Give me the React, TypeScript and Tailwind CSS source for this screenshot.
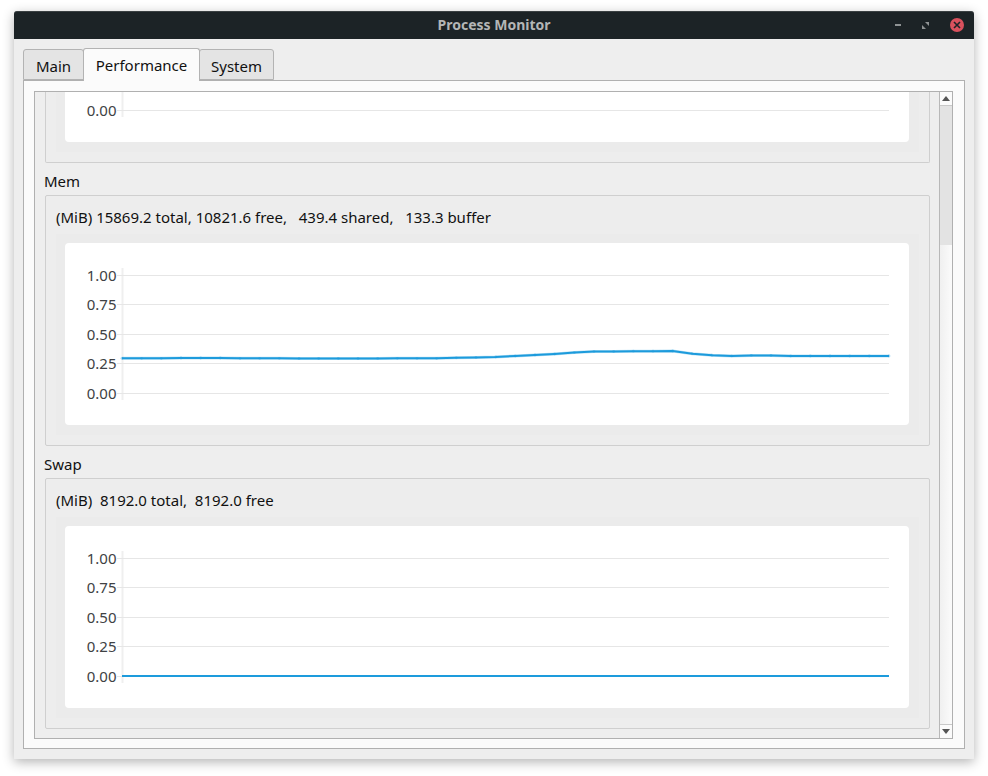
const FONT = "font-['Noto_Sans',sans-serif]";

const TICKS = ['1.00', '0.75', '0.50', '0.25', '0.00'];
const TICK_Y = [32, 61, 91, 120, 150];

// one sample every 19.67px, y is in chart pixels
const MEM_Y = [
  115.3, 115.3, 115.3, 115, 115, 115, 115.3, 115.3, 115.3, 115.5, 115.5, 115.5, 115.5, 115.4, 115.3, 115.3, 115.3, 114.8, 114.4, 114,
  113, 112, 111, 109.6, 108.6, 108.5, 108.2, 108.2, 108, 110.7, 112.2, 112.9, 112.4, 112.5, 113, 113, 113, 113, 113, 113,
];
const SWAP_Y = [150, 150];

function Chart({ data = [], cropTop = 0, markers = false }: { data?: number[]; cropTop?: number; markers?: boolean }) {
  const height = 182 - cropTop;
  const step = data.length > 1 ? 767 / (data.length - 1) : 0;
  const points = data.map((y, i) => [57 + i * step, y - cropTop]);
  const pointsAttr = points.map(([x, y]) => `${x},${y}`).join(' ');

  return (
    <svg width="844" height={height} className={cropTop ? 'block rounded-b bg-white' : 'block rounded bg-white'}>
      <line x1="57.5" y1={Math.max(25 - cropTop, 0)} x2="57.5" y2={157 - cropTop} stroke="#efefef" strokeWidth="2" />
      {TICKS.map((tick, i) =>
        TICK_Y[i] - cropTop < 8 ? null : (
          <g key={tick}>
            <line x1="52" y1={TICK_Y[i] - cropTop + 0.5} x2="824" y2={TICK_Y[i] - cropTop + 0.5} stroke="#e6e6e6" />
            <text
              x="51.5"
              y={TICK_Y[i] - cropTop + 5.5}
              textAnchor="end"
              fontSize="15"
              fill="#404244"
              fontFamily="Noto Sans, sans-serif"
            >
              {tick}
            </text>
          </g>
        ),
      )}
      {data.length > 0 && (
        <>
          {markers && <polyline points={pointsAttr} fill="none" stroke="#20a0de" strokeOpacity="0.3" strokeWidth="3" />}
          <polyline points={pointsAttr} fill="none" stroke="#1d9bdc" strokeWidth="2" />
          {markers &&
            points.map(([x, y]) => <circle key={x} cx={x} cy={y} r="1.4" fill="#1d9bdc" fillOpacity="0.4" />)}
        </>
      )}
    </svg>
  );
}

function MetricGroup({
  label,
  info,
  data,
  markers = false,
}: {
  label: string;
  info: string;
  data: number[];
  markers?: boolean;
}) {
  return (
    <div className="mt-[10px]">
      <div className="h-[22px] pl-[9px] text-[15px] leading-[16px] text-[#111]">{label}</div>
      <div className="ml-[10px] h-[251px] w-[885px] rounded-[2px] border border-[#cfcfcf] bg-[#ededed]">
        <div className="h-[38px] whitespace-pre pl-[10px] pt-[12px] text-[15px] leading-[19px] text-[#111]">{info}</div>
        <div className="mx-[10px] bg-[#ebebeb] px-[9px] pb-[10px] pt-[9px]">
          <Chart data={data} markers={markers} />
        </div>
      </div>
    </div>
  );
}

export default function App() {
  return (
    <div className={`h-[776px] w-[988px] bg-white pl-[14px] pt-[11px] ${FONT}`}>
      <div className="flex h-[748px] w-[960px] flex-col rounded-t-[3px] bg-[#eeeeee] shadow-[0_3px_12px_rgba(0,0,0,0.3)]">
        <div className="relative flex h-[28px] shrink-0 items-center justify-center rounded-t-[3px] border-t border-[#3a4042] bg-[#1c2326]">
          <span className="pb-[2px] text-[14px] font-bold text-[#b4b6b6]">Process Monitor</span>
          <div className="absolute right-[10px] top-[6px] flex items-center gap-[21px]">
            <div className="h-[2px] w-[6px] bg-[#8f9394]" />
            <svg width="7" height="7" viewBox="0 0 7 7">
              <path d="M7 0v4L3 0zM0 7V3l4 4z" fill="#8f9394" />
            </svg>
            <div className="flex h-[14px] w-[14px] items-center justify-center rounded-full bg-[#d9515d]">
              <svg width="8" height="8" viewBox="0 0 8 8">
                <path d="M1 1l6 6M7 1L1 7" stroke="#1c2326" strokeWidth="1.6" />
              </svg>
            </div>
          </div>
        </div>

        <div className="flex h-[41px] shrink-0 items-end pl-[9px] text-[15px] text-[#111]">
          <div className="-mr-px flex h-[31px] w-[61px] items-center justify-center rounded-t-[3px] border border-[#b3b3b3] bg-[#e4e4e4] pt-[3px]">
            Main
          </div>
          <div className="relative z-10 -mb-px flex h-[33px] w-[117px] items-center justify-center rounded-t-[3px] border border-b-0 border-[#b3b3b3] bg-[#fbfbfb]">
            Performance
          </div>
          <div className="-ml-px flex h-[31px] w-[75px] items-center justify-center rounded-t-[3px] border border-[#b3b3b3] bg-[#e4e4e4] pt-[3px]">
            System
          </div>
        </div>

        <div className="mx-[9px] h-[669px] w-[942px] border border-[#b0b0b0] bg-[#fbfbfb] p-[10px]">
          <div className="flex h-[648px] w-[919px] border border-[#b0b0b0]">
            <div className="h-full w-[904px] overflow-hidden bg-[#eeeeee]">
              {/* tail of the group scrolled out above */}
              <div className="ml-[10px] h-[71px] w-[885px] rounded-b-[2px] border-x border-b border-[#cfcfcf] bg-[#ededed]">
                <div className="mx-[10px] bg-[#ebebeb] px-[9px] pb-[10px]">
                  <Chart cropTop={132} />
                </div>
              </div>
              <MetricGroup
                label="Mem"
                info="(MiB) 15869.2 total, 10821.6 free,   439.4 shared,   133.3 buffer"
                data={MEM_Y}
                markers
              />
              <MetricGroup label="Swap" info="(MiB)  8192.0 total,  8192.0 free" data={SWAP_Y} />
            </div>
            <div className="flex w-[13px] flex-col border-l border-[#b8b8b8] bg-[#fbfbfb]">
              <div className="flex h-[14px] items-center justify-center border-b border-[#c8c8c8]">
                <svg width="8" height="5" viewBox="0 0 8 5">
                  <path d="M4 0l4 5H0z" fill="#555" />
                </svg>
              </div>
              <div className="h-[139px] bg-[#e3e3e3]" />
              <div className="flex-1 bg-gradient-to-r from-[#f0f0f0] to-[#fbfbfb]" />
              <div className="flex h-[14px] items-center justify-center border-t border-[#c8c8c8]">
                <svg width="8" height="5" viewBox="0 0 8 5">
                  <path d="M0 0h8L4 5z" fill="#555" />
                </svg>
              </div>
            </div>
          </div>
        </div>
      </div>
    </div>
  );
}
